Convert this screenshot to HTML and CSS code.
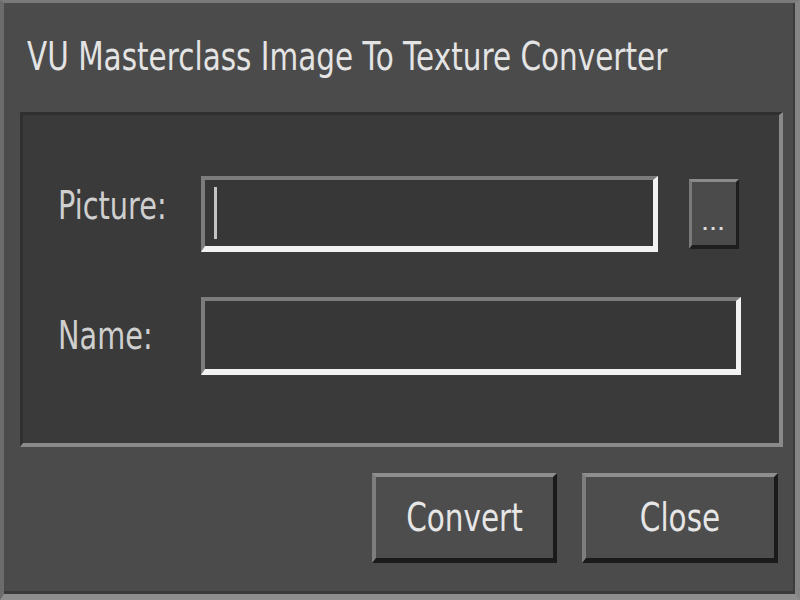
FILE: index.html
```html
<!DOCTYPE html>
<html>
<head>
<meta charset="utf-8">
<link rel="stylesheet" href="styles.css">
</head>
<body>
<div class="window">
  <div class="title"><span class="txt title-txt">VU Masterclass Image To Texture Converter</span></div>
  <div class="panel">
    <div class="row row-picture">
      <label class="label label-picture"><span class="txt">Picture:</span></label>
      <div class="field field-picture"><span class="caret"></span></div>
      <div class="browse"><span class="dots">...</span></div>
    </div>
    <div class="row row-name">
      <label class="label"><span class="txt">Name:</span></label>
      <div class="field field-name"></div>
    </div>
  </div>
  <div class="actions">
    <div class="btn btn-convert"><span class="txt">Convert</span></div>
    <div class="btn btn-close"><span class="txt">Close</span></div>
  </div>
</div>
</body>
</html>
```

FILE: styles.css
```css
html, body {
  margin: 0;
  padding: 0;
  background: #4a4a4a;
}
body {
  width: 800px;
  height: 600px;
  overflow: hidden;
  font-family: "DejaVu Sans", sans-serif;
}
.window {
  box-sizing: border-box;
  width: 800px;
  height: 600px;
  background: #4b4b4b;
  border-top: 3px solid #7a7a7a;
  border-left: 4px solid #6c6c6c;
  border-right: 5px solid #858585;
  border-bottom: 6px solid #8e8e8e;
  box-shadow: inset 0 -3px 0 #3a3a3a, inset -2px 0 0 #3c3c3c;
  display: flex;
  flex-direction: column;
}
.txt {
  display: inline-block;
  transform: scaleY(1.34);
  transform-origin: center;
  white-space: nowrap;
}
.title {
  height: 109px;
  box-sizing: border-box;
  padding-left: 23px;
  padding-top: 36px;
  font-size: 29.5px;
  line-height: 36px;
  color: #e4e4e4;
}
.panel {
  margin: 0 12px 0 16px;
  background: #3a3a3a;
  border-top: 3px solid #303030;
  border-left: 3px solid #303030;
  border-right: 4px solid #8a8a8a;
  border-bottom: 4px solid #8a8a8a;
  padding: 61px 38px 68px 35px;
  display: flex;
  flex-direction: column;
  gap: 45px;
}
.row {
  display: flex;
  align-items: center;
}
.label {
  width: 143px;
  flex: none;
  font-size: 28.8px;
  line-height: 34px;
  color: #cfcfcf;
}
.label-picture {
  margin-bottom: 16px;
}
.field {
  box-sizing: border-box;
  background: #373737;
  border-top: 4px solid #7c7c7c;
  border-left: 4px solid #7c7c7c;
  border-right: 5px solid #f2f2f2;
  border-bottom: 6px solid #f2f2f2;
  display: flex;
  align-items: center;
}
.field-picture {
  width: 457px;
  height: 76px;
  padding-left: 9px;
}
.field-name {
  flex: 1;
  height: 78px;
}
.caret {
  width: 3px;
  height: 52px;
  background: #c4c4c4;
}
.browse {
  box-sizing: border-box;
  margin-left: 31px;
  width: 50px;
  height: 70px;
  background: #4b4b4b;
  border-top: 3px solid #8a8a8a;
  border-left: 3px solid #7a7a7a;
  border-right: 3px solid #1e1e1e;
  border-bottom: 4px solid #1e1e1e;
  display: flex;
  justify-content: center;
  align-items: flex-end;
  padding-bottom: 12px;
}
.dots {
  color: #dcdcdc;
  font-size: 16px;
  line-height: 16px;
  font-weight: bold;
  letter-spacing: 2px;
}
.actions {
  display: flex;
  justify-content: flex-end;
  gap: 25px;
  padding-top: 26px;
  padding-right: 17px;
}
.btn {
  box-sizing: border-box;
  height: 90px;
  background: #4d4d4d;
  border-top: 4px solid #8e8e8e;
  border-left: 4px solid #7e7e7e;
  border-right: 4px solid #1a1a1a;
  border-bottom: 5px solid #1a1a1a;
  display: flex;
  align-items: center;
  justify-content: center;
  font-size: 29.5px;
  line-height: 36px;
  color: #e6e6e6;
}
.btn-convert {
  width: 185px;
}
.btn-close {
  width: 196px;
}
```
